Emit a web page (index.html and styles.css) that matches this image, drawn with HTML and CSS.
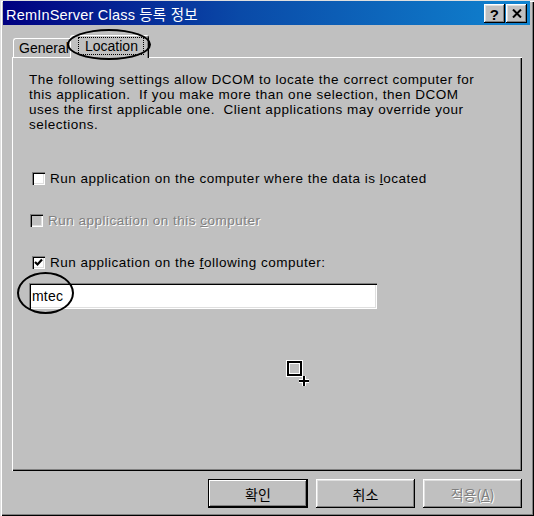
FILE: index.html
```html
<!DOCTYPE html>
<html>
<head>
<meta charset="utf-8">
<link rel="stylesheet" href="styles.css">
</head>
<body>
<div class="window">
  <div class="titlebar">
    <span class="title">RemInServer Class 등록 정보</span>
    <div class="tbtns">
      <span class="tbtn help">?</span>
      <span class="tbtn"><svg width="10" height="9" viewBox="0 0 10 9"><path d="M1 0.5 L9 8.5 M9 0.5 L1 8.5" stroke="#000" stroke-width="2" fill="none"/></svg></span>
    </div>
  </div>
  <div class="main">
    <div class="tabs">
      <div class="tab general">General</div>
      <div class="tab active"><span class="focus">Location</span></div>
    </div>
    <div class="panel">
      <p class="desc">The following settings allow DCOM to locate the correct computer for<br>this application.  If you make more than one selection, then DCOM<br>uses the first applicable one.  Client applications may override your<br>selections.</p>
      <div class="check first"><span class="box"></span><span class="label">Run application on the computer where the data is <u>l</u>ocated</span></div>
      <div class="check disabled"><span class="box"></span><span class="label">Run application on this <u>c</u>omputer</span></div>
      <div class="check"><span class="box"><svg width="9" height="9" viewBox="0 0 9 9"><path d="M1 4 L3.5 6.5 L8 1.5" stroke="#000" stroke-width="2.2" fill="none"/></svg></span><span class="label">Run application on the <u>f</u>ollowing computer:</span></div>
      <div class="input">mtec</div>
    </div>
    <div class="buttons">
      <div class="btn default"><span>확인</span></div>
      <div class="btn">취소</div>
      <div class="btn disabled">적용(<u>A</u>)</div>
    </div>
  </div>
  <div class="ellipse e-tab"></div>
  <div class="ellipse e-input"></div>
  <svg class="cursor" width="28" height="30" viewBox="0 0 28 30">
    <rect x="3" y="3" width="13" height="13" fill="none" stroke="#fff" stroke-width="4"/>
    <rect x="3" y="3" width="13" height="13" fill="none" stroke="#000" stroke-width="2"/>
    <path d="M19 17 V27 M14 22 H24" stroke="#fff" stroke-width="4" fill="none"/>
    <path d="M19 17 V27 M14 22 H24" stroke="#000" stroke-width="2" fill="none"/>
  </svg>
</div>
</body>
</html>
```

FILE: styles.css
```css
html, body {
  margin: 0;
  padding: 0;
  background: #c0c0c0;
}

.window {
  position: relative;
  width: 534px;
  height: 516px;
  box-sizing: border-box;
  background: #c0c0c0;
  padding: 1px 4px 3px 3px;
  box-shadow: inset 1px 1px #dfdfdf, inset 2px 2px #fff, inset -1px -1px #000, inset -2px -2px #808080;
  display: flex;
  flex-direction: column;
  font-family: "Liberation Sans", "Noto Sans CJK KR", sans-serif;
  color: #000;
}

.titlebar {
  height: 24px;
  flex: none;
  background: linear-gradient(to right, #000080 0%, #0a4aa8 45%, #1084d0 100%);
  display: flex;
  align-items: center;
  justify-content: space-between;
  padding: 0 3px 0 3px;
  color: #fff;
  font-size: 14.5px;
  letter-spacing: 0.2px;
}

.title {
  white-space: pre;
}

.tbtns {
  display: flex;
  gap: 1px;
  padding-top: 1px;
}

.tbtn {
  width: 21px;
  height: 19px;
  box-sizing: border-box;
  background: #c0c0c0;
  box-shadow: inset -1px -1px #000, inset 1px 1px #fff, inset -2px -2px #808080, inset 2px 2px #dfdfdf;
  display: flex;
  align-items: center;
  justify-content: center;
}

.tbtn.help {
  color: #000;
  font-weight: bold;
  font-size: 15px;
  line-height: 1;
  padding-top: 1px;
}

.main {
  flex: 1;
  display: flex;
  flex-direction: column;
  padding: 10px 8px 5px 9px;
  min-height: 0;
}

.tabs {
  height: 22px;
  flex: none;
  display: flex;
  align-items: flex-end;
  padding-left: 1px;
  position: relative;
  z-index: 1;
  font-size: 14px;
}

.tab {
  height: 19px;
  box-sizing: border-box;
  border-top: 1px solid #fff;
  border-left: 1px solid #fff;
  border-right: 1px solid #000;
  border-radius: 3px 3px 0 0;
  box-shadow: inset -1px 0 #808080;
  line-height: 17px;
  white-space: nowrap;
  overflow: hidden;
}

.tab.general {
  width: 59px;
  padding: 1px 0 0 5px;
  flex: none;
}

.tab.active {
  height: 23px;
  margin-left: -2px;
  margin-bottom: -1px;
  width: 79px;
  flex: none;
  background: #c0c0c0;
  padding: 1px 2px 1px 7px;
  display: flex;
  align-items: flex-start;
  overflow: visible;
}

.focus {
  border: 1px dotted #000;
  padding: 0 5px 0 6px;
  height: 18px;
  line-height: 17px;
  box-sizing: border-box;
}

.panel {
  flex: 1;
  min-height: 0;
  box-shadow: inset 1px 1px #fff, inset -1px -1px #000, inset -2px -2px #808080;
  padding: 15px 16px 0 17px;
  font-size: 13.5px;
  letter-spacing: 0.5px;
}

.desc {
  margin: 0;
  line-height: 15px;
  white-space: pre;
}

.check {
  display: flex;
  align-items: center;
  height: 15px;
  margin-top: 27px;
  margin-left: 3px;
}

.check.first {
  margin-top: 39px;
}

.check.disabled {
  margin-left: 1px;
  color: #808080;
  text-shadow: 1px 1px #fff;
}

.box {
  width: 13px;
  height: 13px;
  box-sizing: border-box;
  background: #fff;
  box-shadow: inset 1px 1px #808080, inset 2px 2px #000, inset -1px -1px #fff, inset -2px -2px #dfdfdf;
  margin-right: 5px;
  display: flex;
  align-items: center;
  justify-content: center;
  flex: none;
}

.check.disabled .box {
  background: #c0c0c0;
}

.label u {
  text-decoration: underline;
}

.input {
  margin-top: 13px;
  width: 348px;
  height: 26px;
  box-sizing: border-box;
  background: #fff;
  box-shadow: inset 1px 1px #808080, inset 2px 2px #000, inset -1px -1px #fff, inset -2px -2px #dfdfdf;
  padding: 4px 3px 0 3px;
  font-size: 14px;
  letter-spacing: 0.2px;
  line-height: 18px;
}

.buttons {
  flex: none;
  display: flex;
  justify-content: flex-end;
  gap: 8px;
  margin-top: 8px;
}

.btn {
  width: 99px;
  height: 29px;
  box-sizing: border-box;
  background: #c0c0c0;
  box-shadow: inset -1px -1px #000, inset 1px 1px #fff, inset -2px -2px #808080, inset 2px 2px #dfdfdf;
  display: flex;
  align-items: center;
  justify-content: center;
  font-size: 14px;
  font-family: "Noto Sans CJK KR", "Liberation Sans", sans-serif;
}

.btn.default {
  width: 100px;
  box-shadow: inset 0 0 0 1px #000, inset -2px -2px #000, inset 2px 2px #fff, inset -3px -3px #808080;
}

.btn.disabled {
  color: #808080;
  text-shadow: 1px 1px #fff;
}

.ellipse {
  position: absolute;
  border: 2px solid #000;
  border-radius: 50%;
  box-sizing: border-box;
  z-index: 2;
}

.e-tab {
  left: 67px;
  top: 29px;
  width: 84px;
  height: 31px;
}

.e-input {
  left: 17px;
  top: 272px;
  width: 57px;
  height: 42px;
}

.cursor {
  position: absolute;
  left: 285px;
  top: 359px;
  z-index: 2;
}
```
